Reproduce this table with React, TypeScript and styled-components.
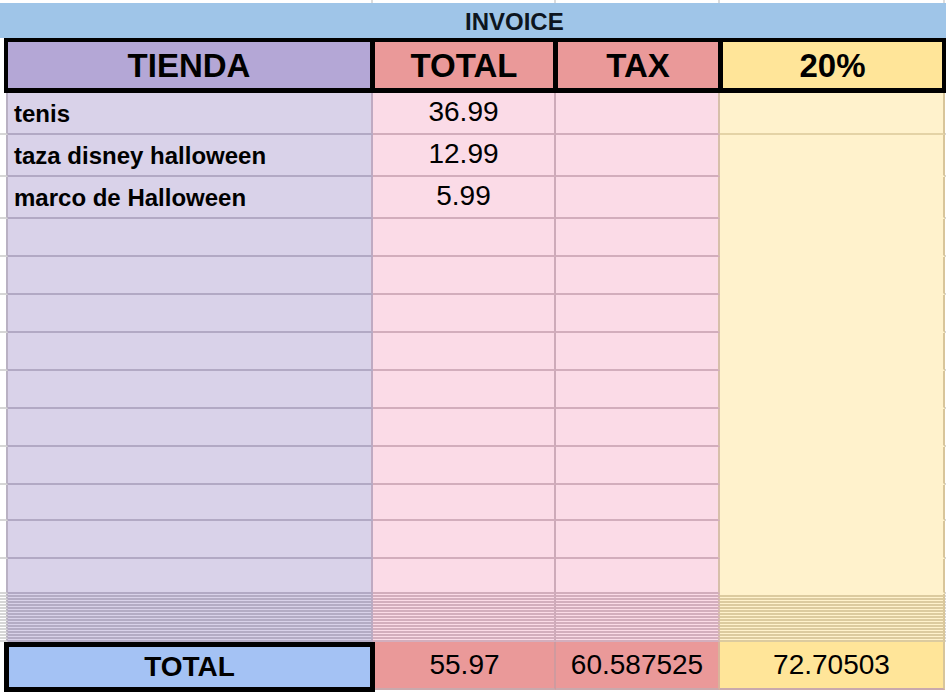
import React from 'react'
import styled, { createGlobalStyle } from 'styled-components'

const GlobalStyle = createGlobalStyle`
  *, *::before, *::after {
    box-sizing: border-box;
  }
  html, body {
    margin: 0;
    padding: 0;
    background: #ffffff;
  }
  body {
    width: 946px;
    height: 694px;
    overflow: hidden;
    font-family: 'Liberation Sans', Arial, sans-serif;
    color: #000000;
  }
`

// gutter | TIENDA | TOTAL | TAX | 20% | edge
const COLS = '8px 365px 183px 164px 225px 1px'

type Tone = { bg: string; line: string; edge: string }

const tones: Tone[] = [
  { bg: '#d9d2e9', line: '#b2a9c4', edge: '#bfaac2' },
  { bg: '#fbdbe7', line: '#d2adbc', edge: '#cdaab9' },
  { bg: '#fbdbe7', line: '#d2adbc', edge: '#d7bfaa' },
  { bg: '#fff2cc', line: '#e4d3a6', edge: '#d8c59a' }
]

const thinTones = ['#b4acc4', '#d3aebd', '#d3aebd', '#dccb9f']

const Sheet = styled.div`
  display: flex;
  flex-direction: column;
  width: 946px;
`

const TopStrip = styled.div`
  display: grid;
  grid-template-columns: ${COLS};
  height: 3px;
`

const StripCell = styled.div`
  border-right: 2px solid #dcdcdc;
`

const InvoiceBand = styled.div`
  height: 35px;
  background: #9fc5e8;
  display: flex;
  align-items: center;
  padding: 3px 0 0 465px;
  font-size: 24px;
  font-weight: 700;
  color: #0d1520;
`

const HeaderRow = styled.div`
  display: grid;
  grid-template-columns: 362px 178px 160px 219px;
  grid-auto-rows: 46px;
  gap: 5px;
  padding: 4px 4px 5px;
  margin-left: 4px;
  background: #000000;
`

const HeadCell = styled.div<{ $bg: string }>`
  background: ${p => p.$bg};
  display: flex;
  align-items: center;
  justify-content: center;
  font-size: 33px;
  font-weight: 700;
  padding-top: 2px;
`

const Row = styled.div<{ $h: number }>`
  display: grid;
  grid-template-columns: ${COLS};
  grid-template-rows: ${p => p.$h}px;
  height: ${p => p.$h}px;
  overflow: hidden;
`

const Gutter = styled.div`
  background: #ffffff;
  border-right: 2px solid #b9b1c3;
  border-bottom: 2px solid #d6d6d6;
`

const EdgeCell = styled.div`
  background: #ffffff;
  border-bottom: 2px solid #d6d6d6;
`

const Cell = styled.div<{ $tone: Tone; $noLine?: boolean; $center?: boolean; $bold?: boolean }>`
  background: ${p => p.$tone.bg};
  border-right: 2px solid ${p => p.$tone.edge};
  border-bottom: 2px solid ${p => (p.$noLine ? p.$tone.bg : p.$tone.line)};
  display: flex;
  align-items: flex-end;
  justify-content: ${p => (p.$center ? 'center' : 'flex-start')};
  padding: 0 6px 7px;
  font-size: ${p => (p.$bold ? '24px' : '28px')};
  font-weight: ${p => (p.$bold ? 700 : 400)};
  line-height: 1;
  white-space: nowrap;
`

const ThinCell = styled.div<{ $tone: Tone; $line: string }>`
  background: ${p => p.$tone.bg};
  border-right: 2px solid ${p => p.$tone.edge};
  border-bottom: 2px solid ${p => p.$line};
`

const FooterRow = styled.div`
  display: flex;
  align-items: flex-start;
  height: 52px;
`

const TotalLabel = styled.div`
  margin-left: 4px;
  width: 371px;
  height: 50px;
  border: 5px solid #000000;
  background: #a4c2f4;
  display: flex;
  align-items: center;
  justify-content: center;
  font-size: 28px;
  font-weight: 700;
`

const SumCell = styled.div<{ $w: number; $bg: string; $edge: string }>`
  width: ${p => p.$w}px;
  height: 48px;
  background: ${p => p.$bg};
  border-right: 2px solid ${p => p.$edge};
  border-bottom: 2px solid #c9a9ad;
  display: flex;
  align-items: center;
  justify-content: center;
  font-size: 28px;
`

type Item = { name: string; total: string; h: number }

const items: Item[] = [
  { name: 'tenis', total: '36.99', h: 42 },
  { name: 'taza disney halloween', total: '12.99', h: 42 },
  { name: 'marco de Halloween', total: '5.99', h: 42 }
]

const emptyHeights = [38, 38, 38, 38, 38, 38, 38, 36, 38, 35]
const thinRows = Array.from({ length: 16 }, (_, i) => i)

const DataRow = ({ name, total, h, first }: { name?: string; total?: string; h: number; first?: boolean }) => (
  <Row $h={h}>
    <Gutter />
    <Cell $tone={tones[0]} $bold>{name}</Cell>
    <Cell $tone={tones[1]} $center>{total}</Cell>
    <Cell $tone={tones[2]} />
    <Cell $tone={tones[3]} $noLine={!first} />
    <EdgeCell />
  </Row>
)

const ThinRow = () => (
  <Row $h={3}>
    <Gutter />
    {tones.map((t, i) => (
      <ThinCell key={i} $tone={t} $line={thinTones[i]} />
    ))}
    <EdgeCell />
  </Row>
)

export default function App() {
  return (
    <>
      <GlobalStyle />
      <Sheet>
        <TopStrip>
          <div />
          <StripCell />
          <StripCell />
          <StripCell />
          <StripCell />
          <div />
        </TopStrip>
        <InvoiceBand>INVOICE</InvoiceBand>
        <HeaderRow>
          <HeadCell $bg="#b4a7d6">TIENDA</HeadCell>
          <HeadCell $bg="#ea9999">TOTAL</HeadCell>
          <HeadCell $bg="#ea9999">TAX</HeadCell>
          <HeadCell $bg="#ffe599">20%</HeadCell>
        </HeaderRow>
        {items.map((it, i) => (
          <DataRow key={it.name} name={it.name} total={it.total} h={it.h} first={i === 0} />
        ))}
        {emptyHeights.map((h, i) => (
          <DataRow key={'e' + i} h={h} />
        ))}
        {thinRows.map(i => (
          <ThinRow key={'t' + i} />
        ))}
        <FooterRow>
          <TotalLabel>TOTAL</TotalLabel>
          <SumCell $w={181} $bg="#ea9999" $edge="#cf9a9e">55.97</SumCell>
          <SumCell $w={164} $bg="#ea9999" $edge="#d9b39a">60.587525</SumCell>
          <SumCell $w={225} $bg="#ffe599" $edge="#d8c59a">72.70503</SumCell>
        </FooterRow>
      </Sheet>
    </>
  )
}
